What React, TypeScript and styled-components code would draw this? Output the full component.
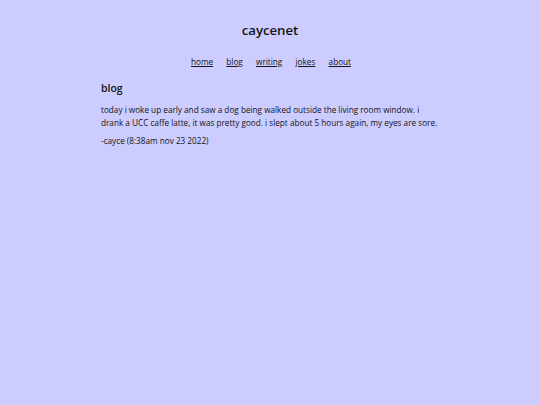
import React from "react";
import styled, { createGlobalStyle } from "styled-components";

const Global = createGlobalStyle`
  html, body { margin: 0; padding: 0; background: #ccccff; }
  body { font-family: "Open Sans", "Noto Sans", sans-serif; color: #151515; }
`;

const Page = styled.div`
  width: 338px;
  margin: 0 auto;
  padding-top: 20px;
`;

const Title = styled.h1`
  font-size: 13.2px;
  font-weight: 600;
  text-align: center;
  margin: 0 0 16px;
  line-height: 20px;
`;

const Nav = styled.nav`
  display: flex;
  justify-content: center;
  gap: 13.25px;
  font-size: 8.2px;
  line-height: 12px;
  margin: 0 0 12px 2px;
`;

const NavLink = styled.a`
  color: #151515;
  text-decoration: underline;
`;

const Heading = styled.h2`
  font-size: 10.5px;
  font-weight: 600;
  margin: 0 0 6.5px;
  line-height: 16px;
`;

const Para = styled.p`
  font-size: 8.2px;
  line-height: 13px;
  margin: 0 0 5px;
`;

export default function App() {
  return (
    <>
      <Global />
      <Page>
        <Title>caycenet</Title>
        <Nav>
          <NavLink href="#">home</NavLink>
          <NavLink href="#">blog</NavLink>
          <NavLink href="#">writing</NavLink>
          <NavLink href="#">jokes</NavLink>
          <NavLink href="#">about</NavLink>
        </Nav>
        <Heading>blog</Heading>
        <Para>
          today i woke up early and saw a dog being walked outside the living room window. i drank a UCC caffe latte, it was pretty good. i slept about 5 hours again, my eyes are sore.
        </Para>
        <Para>-cayce (8:38am nov 23 2022)</Para>
      </Page>
    </>
  );
}
